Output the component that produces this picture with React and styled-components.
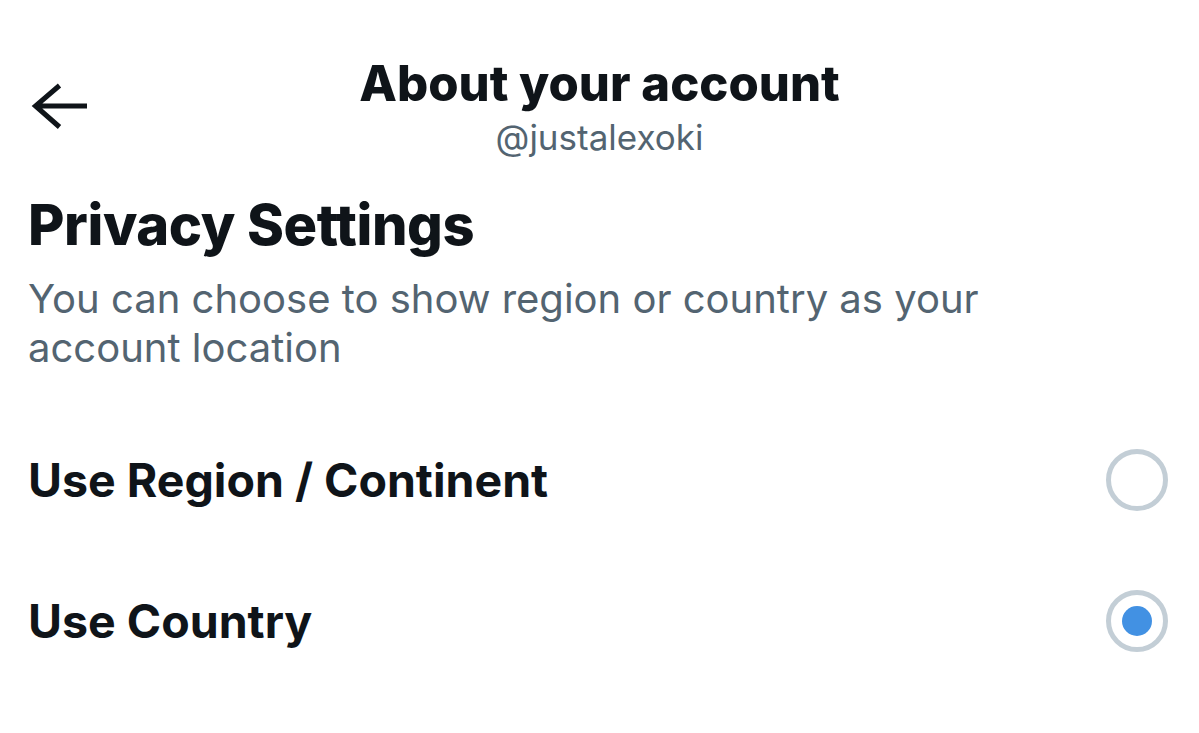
import React, { useState } from "react";
import styled, { createGlobalStyle } from "styled-components";

const GlobalStyle = createGlobalStyle`
  html, body {
    margin: 0;
    padding: 0;
    background: #ffffff;
  }
  body {
    font-family: Inter, "Noto Sans", "Liberation Sans", sans-serif;
    color: #0f1419;
  }
`;

const Page = styled.div`
  width: 1199px;
  height: 733px;
  overflow: hidden;
  background: #ffffff;
`;

const Header = styled.header`
  display: grid;
  grid-template-columns: 1fr auto 1fr;
  align-items: start;
  padding: 55px 31px 0;
`;

const BackButton = styled.button`
  justify-self: start;
  margin-top: 25px;
  padding: 0;
  border: none;
  background: none;
  display: flex;
  cursor: pointer;
`;

const TitleBlock = styled.div`
  display: flex;
  flex-direction: column;
  align-items: center;
`;

const Title = styled.h1`
  margin: 0;
  font-size: 49px;
  line-height: 58px;
  font-weight: 800;
`;

const Handle = styled.div`
  margin-top: 4px;
  font-size: 35px;
  line-height: 40px;
  color: #536471;
`;

const Section = styled.section`
  padding: 36px 28px 0;
`;

const SectionTitle = styled.h2`
  margin: 0;
  font-size: 56px;
  line-height: 64px;
  font-weight: 800;
  letter-spacing: -0.4px;
`;

const Description = styled.p`
  margin: 17px 0 0;
  font-size: 40px;
  line-height: 49px;
  color: #536471;
  max-width: 960px;
`;

const Options = styled.div`
  display: flex;
  flex-direction: column;
  margin-top: 37px;
`;

const Option = styled.label`
  display: flex;
  align-items: center;
  justify-content: space-between;
  height: 141px;
  cursor: pointer;
`;

const OptionLabel = styled.span`
  font-size: 46.5px;
  font-weight: 700;
`;

const Radio = styled.span`
  box-sizing: border-box;
  width: 62px;
  height: 62px;
  margin-right: 3px;
  border-radius: 50%;
  border: 5px solid #c3ced6;
  display: flex;
  align-items: center;
  justify-content: center;
  &::after {
    content: "";
    width: 30px;
    height: 30px;
    border-radius: 50%;
    background: ${(p) => (p.$checked ? "#4291e3" : "transparent")};
  }
`;

const BackArrow = () => (
  <svg width="58" height="52" viewBox="0 0 58 52" fill="none">
    <path
      d="M56 26H6M28.5 5.5L4.5 26l24 21"
      stroke="#0f1419"
      strokeWidth="5"
    />
  </svg>
);

const options = ["Use Region / Continent", "Use Country"];

export default function App() {
  const [selected, setSelected] = useState(1);

  return (
    <Page>
      <GlobalStyle />
      <Header>
        <BackButton aria-label="Back">
          <BackArrow />
        </BackButton>
        <TitleBlock>
          <Title>About your account</Title>
          <Handle>@justalexoki</Handle>
        </TitleBlock>
        <div />
      </Header>
      <Section>
        <SectionTitle>Privacy Settings</SectionTitle>
        <Description>
          You can choose to show region or country as your account location
        </Description>
        <Options>
          {options.map((label, i) => (
            <Option key={label} onClick={() => setSelected(i)}>
              <OptionLabel>{label}</OptionLabel>
              <Radio $checked={selected === i} />
            </Option>
          ))}
        </Options>
      </Section>
    </Page>
  );
}
